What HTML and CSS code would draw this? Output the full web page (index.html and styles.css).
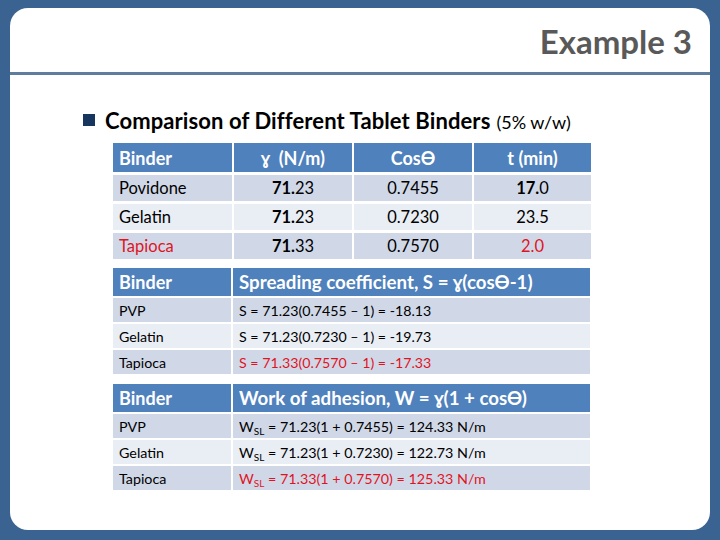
FILE: index.html
```html
<!DOCTYPE html>
<html>
<head>
<meta charset="utf-8">
<link rel="stylesheet" href="styles.css">
</head>
<body>
<div class="card">
  <div class="title">Example 3</div>
  <div class="rule"></div>
  <div class="bullet">
    <span class="sq"></span>
    <span class="btext">Comparison of Different Tablet Binders</span>
    <span class="bsmall">(5% w/w)</span>
  </div>

  <div class="tbl t1">
    <div class="h"><span>Binder</span></div><div class="h c"><span>ɣ&nbsp;&nbsp;(N/m)</span></div><div class="h c"><span>CosƟ</span></div><div class="h c"><span>t (min)</span></div>
    <div class="d"><span>Povidone</span></div><div class="d c"><span><b>71.</b>23</span></div><div class="d c"><span>0.7455</span></div><div class="d c"><span><b>17.</b>0</span></div>
    <div class="l"><span>Gelatin</span></div><div class="l c"><span><b>71.</b>23</span></div><div class="l c"><span>0.7230</span></div><div class="l c"><span>23.5</span></div>
    <div class="d red"><span>Tapioca</span></div><div class="d c"><span><b>71.</b>33</span></div><div class="d c"><span>0.7570</span></div><div class="d c red"><span>2.0</span></div>
  </div>

  <div class="tbl t2">
    <div class="h"><span>Binder</span></div><div class="h"><span>Spreading coefficient, S = ɣ(cosƟ-1)</span></div>
    <div class="d"><span>PVP</span></div><div class="d"><span>S = 71.23(0.7455 – 1) = -18.13</span></div>
    <div class="l"><span>Gelatin</span></div><div class="l"><span>S = 71.23(0.7230 – 1) = -19.73</span></div>
    <div class="d"><span>Tapioca</span></div><div class="d red"><span>S = 71.33(0.7570 – 1) = -17.33</span></div>
  </div>

  <div class="tbl t3">
    <div class="h"><span>Binder</span></div><div class="h"><span>Work of adhesion, W = ɣ(1 + cosƟ)</span></div>
    <div class="d"><span>PVP</span></div><div class="d"><span>W<sub>SL</sub> = 71.23(1 + 0.7455) = 124.33 N/m</span></div>
    <div class="l"><span>Gelatin</span></div><div class="l"><span>W<sub>SL</sub> = 71.23(1 + 0.7230) = 122.73 N/m</span></div>
    <div class="d"><span>Tapioca</span></div><div class="d red"><span>W<sub>SL</sub> = 71.33(1 + 0.7570) = 125.33 N/m</span></div>
  </div>
</div>
</body>
</html>
```
FILE: styles.css
```css
html, body {
  margin: 0;
  padding: 0;
}
body {
  width: 720px;
  height: 540px;
  background: #3a6391;
  font-family: Lato, "Open Sans", "DejaVu Sans", sans-serif;
  padding-top: 8px;
  box-sizing: border-box;
}
.card {
  margin: 0 10px;
  height: 522px;
  background: #ffffff;
  border-radius: 18px;
  overflow: hidden;
}
.title {
  text-align: right;
  padding: 16px 18px 0 0;
  height: 64px;
  box-sizing: border-box;
  font-size: 33px;
  font-weight: 700;
  color: #595959;
  line-height: 34px;
}
.rule {
  height: 3px;
  background: #5f7d9d;
}
.bullet {
  display: flex;
  align-items: baseline;
  margin: 32px 0 0 73px;
  height: 25px;
}
.sq {
  width: 12px;
  height: 12px;
  background: #17365d;
  margin-right: 10px;
  align-self: center;
}
.btext {
  font-size: 22px;
  font-weight: 700;
  color: #000;
  letter-spacing: 0.1px;
}
.bsmall {
  font-size: 18px;
  margin-left: 6px;
  color: #000;
}
.tbl {
  display: grid;
  column-gap: 2px;
  margin-left: 103px;
}
.t1 {
  margin-top: 11px;
  width: 478px;
  grid-template-columns: 119px 118px 118px 117px;
  grid-template-rows: 29px 26px 26px 26px;
  row-gap: 3px;
}
.t2 {
  margin-top: 9px;
  width: 477px;
  grid-template-columns: 118px 357px;
  grid-template-rows: 28px 24px 24px 24px;
  row-gap: 2px;
}
.t3 {
  margin-top: 10px;
  width: 477px;
  grid-template-columns: 118px 357px;
  grid-template-rows: 28px 24px 24px 24px;
  row-gap: 2px;
}
.tbl > div {
  display: flex;
  align-items: center;
  padding-left: 6px;
  color: #000;
  white-space: nowrap;
}
.tbl > .c {
  justify-content: center;
  padding-left: 0;
}
.h {
  background: #4f81bd;
  color: #fff !important;
  font-weight: 700;
  font-size: 18px;
}
.t2 .h + .h, .t3 .h + .h {
  font-size: 18.7px;
}
.d { background: #d0d8e8; }
.l { background: #e9edf4; }
.t1 .d, .t1 .l { font-size: 16.5px; }
.t2 .d, .t2 .l { font-size: 14.2px; }
.t3 .d, .t3 .l { font-size: 14.3px; }
.tbl b { font-weight: 700; }
.tbl > .red { color: #e0141e; }
sub {
  font-size: 10px;
  vertical-align: -3px;
  line-height: 0;
}
```
